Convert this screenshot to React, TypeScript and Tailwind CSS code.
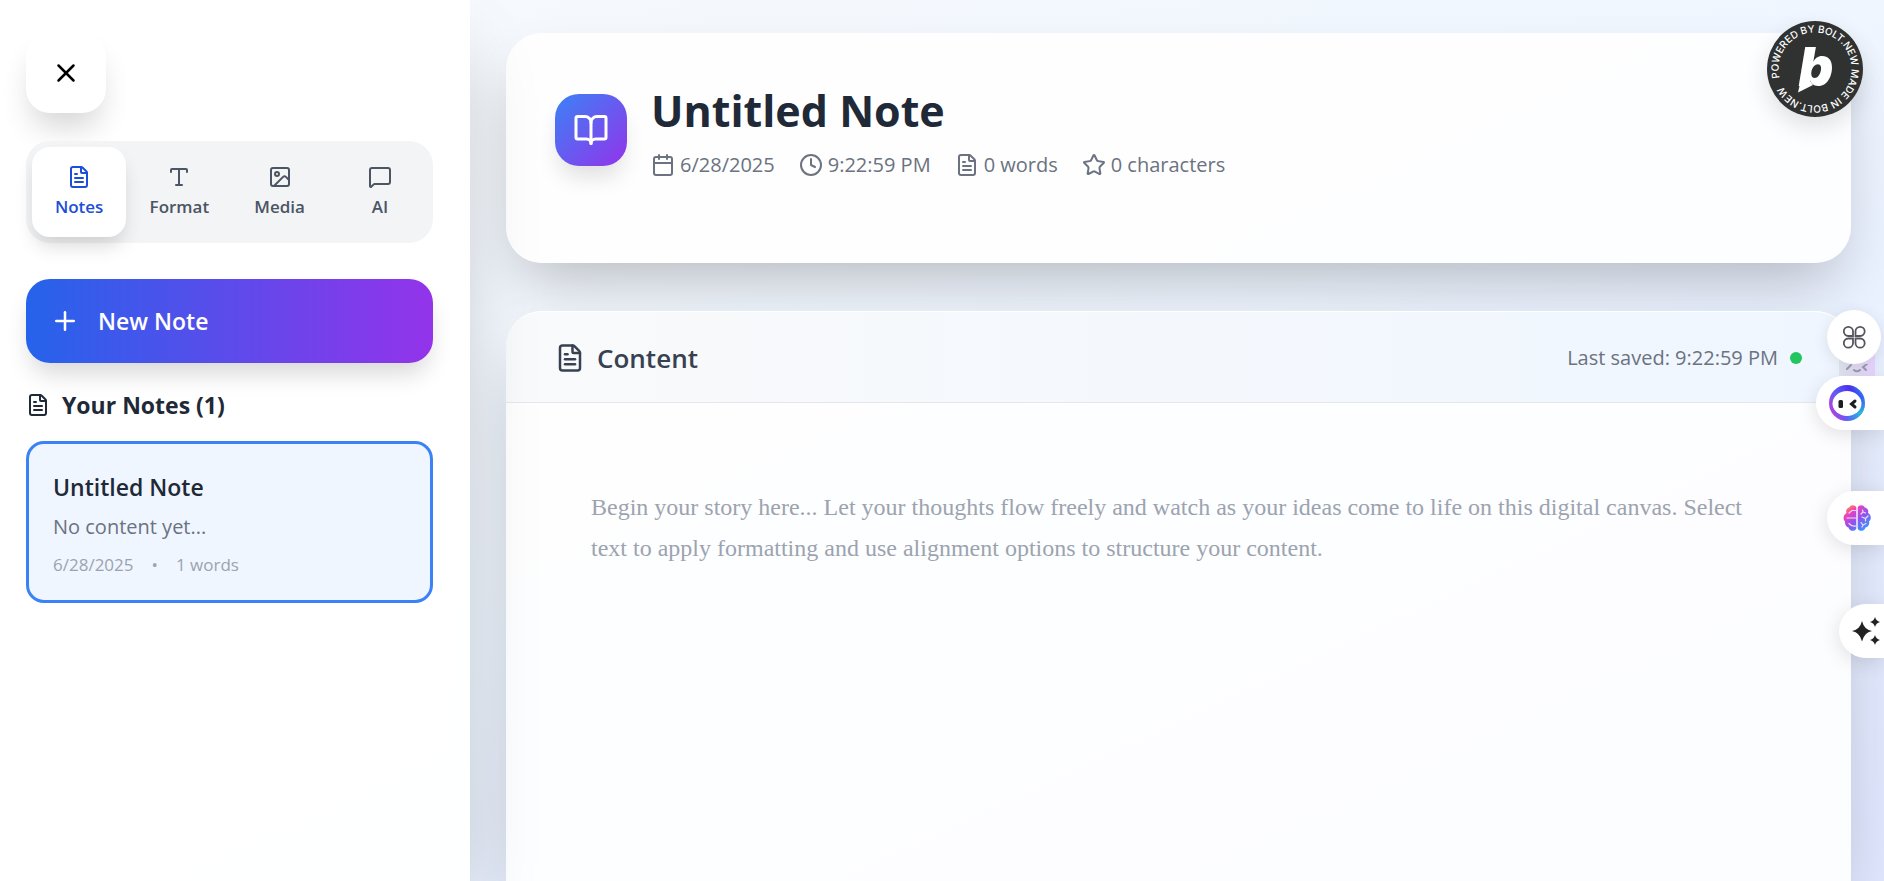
import { useState } from "react";
import type { ReactNode } from "react";
import {
  BookOpen,
  Calendar,
  Clock,
  FileText,
  Image,
  MessageSquare,
  Plus,
  Star,
  Type,
  X,
} from "lucide-react";

const tabs = [
  { id: "notes", label: "Notes", icon: FileText },
  { id: "format", label: "Format", icon: Type },
  { id: "media", label: "Media", icon: Image },
  { id: "ai", label: "AI", icon: MessageSquare },
];

const stats = [
  { label: "6/28/2025", icon: Calendar },
  { label: "9:22:59 PM", icon: Clock },
  { label: "0 words", icon: FileText },
  { label: "0 characters", icon: Star },
];

export default function App() {
  const [content, setContent] = useState("");

  return (
    <div className="relative flex h-screen overflow-hidden bg-linear-to-br/srgb from-[#f8fafc] via-[#eff6ff] to-[#e0e7ff] font-['Segoe_UI','Open_Sans',sans-serif]">
      <Sidebar />

      <main className="flex min-w-0 flex-1 flex-col gap-12 pt-[33px] pr-[33px] pl-9">
        <header className="flex min-h-[230px] shrink-0 items-start gap-6 rounded-[36px] bg-white/90 px-[49px] pt-12 shadow-[0_30px_60px_-15px_rgba(0,0,0,0.25)]">
          <div className="mt-[13px] flex size-18 items-center justify-center rounded-3xl bg-linear-to-br/srgb from-[#3b82f6] to-[#9333ea] text-white shadow-[0_15px_22px_-4px_rgba(0,0,0,0.12)]">
            <BookOpen size={36} />
          </div>
          <div>
            <h1 className="text-[43px] leading-[60px] font-bold text-[#1f2937]">Untitled Note</h1>
            <ul className="mt-2 flex items-center gap-6 text-xl leading-8 text-[#6b7280]">
              {stats.map(({ label, icon: Icon }) => (
                <li key={label} className="flex items-center gap-[5px]">
                  <Icon size={24} />
                  <span>{label}</span>
                </li>
              ))}
            </ul>
          </div>
        </header>

        <section className="flex flex-1 flex-col rounded-t-[36px] bg-white/90 shadow-[0_38px_75px_-18px_rgba(0,0,0,0.25)]">
          <div className="flex h-[92px] items-center justify-between rounded-t-[36px] border-t border-b border-t-white border-b-[#e5e7eb] bg-linear-to-r/srgb from-[#f9fafb] to-[#eff6ff] px-[49px] pt-0.5">
            <h2 className="flex items-center gap-3 text-[26px] font-semibold text-[#374151]">
              <FileText size={30} />
              Content
            </h2>
            <p className="flex items-center gap-3 text-xl text-[#6b7280]">
              Last saved: 9:22:59 PM
              <span className="size-3 rounded-full bg-[#22c55e]" />
            </p>
          </div>
          <textarea
            aria-label="Note content"
            value={content}
            onChange={(e) => setContent(e.target.value)}
            placeholder="Begin your story here... Let your thoughts flow freely and watch as your ideas come to life on this digital canvas. Select text to apply formatting and use alignment options to structure your content."
            className="flex-1 resize-none bg-transparent px-[85px] pt-21 font-['Liberation_Serif',serif] text-2xl leading-[41px] text-[#1f2937] outline-none placeholder:text-[#9ca3af]"
          />
        </section>
      </main>

      <BoltBadge />
      <FloatingTools />
    </div>
  );
}

function Sidebar() {
  const [active, setActive] = useState("notes");

  return (
    <aside className="relative w-[470px] shrink-0 bg-white/95 pt-[33px] pr-[37px] pl-[26px] shadow-[0_38px_75px_-18px_rgba(0,0,0,0.25)]">
      <button
        aria-label="Close sidebar"
        className="flex size-20 items-center justify-center rounded-3xl bg-white text-black shadow-[0_20px_30px_-6px_rgba(0,0,0,0.16)]"
      >
        <X size={30} />
      </button>

      <nav className="mt-7 grid grid-cols-4 gap-1.5 rounded-3xl bg-[#f3f4f6] p-1.5">
        {tabs.map(({ id, label, icon: Icon }) => (
          <button
            key={id}
            onClick={() => setActive(id)}
            className={
              active === id
                ? "flex h-[90px] flex-col items-center justify-center gap-1 rounded-[18px] bg-white pt-0.5 text-[#1d4ed8] shadow-[0_12px_20px_-4px_rgba(0,0,0,0.16)]"
                : "flex h-[90px] flex-col items-center justify-center gap-1 rounded-[18px] pt-0.5 text-[#4b5563]"
            }
          >
            <Icon size={24} />
            <span className="text-[17px] leading-7 font-semibold">{label}</span>
          </button>
        ))}
      </nav>

      <button className="mt-9 flex h-21 w-full items-center gap-[18px] rounded-3xl bg-linear-to-r/srgb from-[#2563eb] to-[#9333ea] px-6 text-[23px] font-semibold text-white shadow-[0_15px_24px_-5px_rgba(0,0,0,0.16)]">
        <Plus size={30} />
        New Note
      </button>

      <h3 className="mt-6 flex items-center gap-3 text-[23px] leading-9 font-bold text-[#1f2937]">
        <FileText size={24} />
        Your Notes (1)
      </h3>

      <article className="mt-[18px] rounded-[18px] border-3 border-[#3b82f6] bg-[#eff6ff] px-6 pt-[25px] pb-[21px] text-[#6b7280]">
        <h4 className="text-[23px] leading-9 font-semibold text-[#1f2937]">Untitled Note</h4>
        <p className="mt-1.5 text-xl leading-8">No content yet...</p>
        <p className="mt-2 flex gap-[18px] text-[17px] leading-7 text-[#9ca3af]">
          <span>6/28/2025</span>
          <span>•</span>
          <span>1 words</span>
        </p>
      </article>
    </aside>
  );
}

function BoltBadge() {
  return (
    <a
      href="https://bolt.new"
      aria-label="Powered by Bolt.new"
      className="absolute top-[21px] right-[21px] size-24 rounded-full shadow-[0_10px_24px_rgba(0,0,0,0.12)]"
    >
      <svg viewBox="0 0 96 96" className="size-full">
        <circle cx="48" cy="48" r="48" fill="#303231" />
        <defs>
          <path id="ring" d="M48 48 m-36.5 0 a36.5 36.5 0 1 1 73 0 a36.5 36.5 0 1 1 -73 0" />
        </defs>
        <g transform="rotate(-14 48 48)">
          <text fill="#fff" className="font-['Inter',sans-serif] text-[10px] font-medium">
            <textPath href="#ring">POWERED BY BOLT.NEW MADE IN BOLT.NEW</textPath>
          </text>
        </g>
        <path d="M36 50 L31 71.500 L46 64 Z" fill="#fff" />
        <text x="31.500" y="65" fill="#fff" className="font-['Inter',sans-serif] text-[54px] font-black italic">
          b
        </text>
      </svg>
    </a>
  );
}

function FloatingTools() {
  return (
    <>
      <div className="absolute top-[340px] right-[9px] flex h-9 w-9 items-end justify-center bg-linear-to-r from-slate-200 to-purple-200">
        <svg viewBox="0 0 24 12" className="h-3 w-6" fill="none" stroke="#9a9fb3" strokeWidth="2" strokeLinecap="round">
          <path d="M6 1 L2 5 M9 6 Q12 8.500 15 6 M22 0 L18 3 L21 6" />
        </svg>
      </div>

      <button
        aria-label="Apps"
        className="absolute top-[310px] right-[3px] flex size-[54px] items-center justify-center rounded-full bg-white shadow-[0_4px_16px_rgba(0,0,0,0.1)]"
      >
        <svg viewBox="0 0 24 24" className="size-6" fill="none" stroke="#55555d" strokeWidth="1.800">
          <path d="M11 11 H6.300 A4.600 4.600 0 1 1 11 6.300 Z" />
          <path d="M13.500 11 V6.300 A4.600 4.600 0 1 1 18.200 11 Z" />
          <path d="M11 13.500 V18.200 A4.600 4.600 0 1 1 6.300 13.500 Z" />
          <path d="M13.500 13.500 H18.200 A4.600 4.600 0 1 1 13.500 18.200 Z" />
        </svg>
      </button>

      <SideTab label="Assistant" className="top-[376px] w-[68px] pl-[13px]">
        <svg viewBox="0 0 36 36" className="size-9">
          <defs>
            <linearGradient id="face" x1="0" y1="0.800" x2="1" y2="0.300">
              <stop offset="0" stopColor="#c23be0" />
              <stop offset="0.400" stopColor="#5b5cf6" />
              <stop offset="0.750" stopColor="#4b2ff0" />
              <stop offset="1" stopColor="#2f7df0" />
            </linearGradient>
            <radialGradient id="faceGlow" cx="0.900" cy="0.800" r="0.450">
              <stop offset="0" stopColor="#24c8dc" />
              <stop offset="1" stopColor="#24c8dc" stopOpacity="0" />
            </radialGradient>
          </defs>
          <circle cx="18" cy="18" r="18" fill="url(#face)" />
          <circle cx="18" cy="18" r="18" fill="url(#faceGlow)" />
          <ellipse cx="18" cy="18.500" rx="14.500" ry="12.500" fill="#fff" />
          <rect x="9.500" y="15" width="4.500" height="8" rx="1.500" fill="#1d1d24" />
          <path d="M26 16 L22.500 19 L26 22" fill="none" stroke="#1d1d24" strokeWidth="3" strokeLinecap="round" />
        </svg>
      </SideTab>

      <SideTab label="Memory" className="top-[491px] w-[57px] pl-4">
        <svg viewBox="0 0 28 28" className="size-7">
          <defs>
            <linearGradient id="brain" x1="0.100" y1="0" x2="0.900" y2="1">
              <stop offset="0" stopColor="#fba41a" />
              <stop offset="0.250" stopColor="#ee3fc0" />
              <stop offset="0.550" stopColor="#8a55f0" />
              <stop offset="1" stopColor="#22a8ff" />
            </linearGradient>
          </defs>
          <path
            d="M13.300 3.500 C12 .5 7.500.5 6.300 3.500 C3.500 4 2.500 7 3.500 9 C.5 10.500-.5 15 2 17.500 C1.500 20.500 3.500 23 5.500 23.500 C6.500 27.500 12 28 13.300 24.500 Z
               M14.700 3.500 C16 .5 20.500.5 21.700 3.500 C24.500 4 26 6.500 25 9 C28 10.500 29 15 26 17.500 C27 20.500 25 23 22.500 23.500 C21.500 27.500 16 28 14.700 24.500 Z"
            fill="url(#brain)"
          />
          <path
            d="M6 9 L9 6.500 H13 M4 14 H13 M6 19.500 Q9 23 13 22 M18 10 L20 8 L19.500 6 M20 8 L22.500 9 M19 13 L22.500 14.500 L25 12 M22.500 14.500 V17 M18 18.500 L20 21 L23 19.500 M20 21 L19 23"
            fill="none"
            stroke="#fbd5f5"
            strokeWidth="1.200"
            strokeLinecap="round"
          />
        </svg>
      </SideTab>

      <SideTab label="Sparkles" className="top-[604px] w-[45px] pl-3">
        <svg viewBox="0 0 30 30" className="size-[30px] shrink-0" fill="#222">
          <path d="M11 5 Q13 13.500 21 15 Q13 16.500 11 25.500 Q9 16.500 1 15 Q9 13.500 11 5 Z" />
          <path d="M24 1 Q25 5 29 6 Q25 7 24 11 Q23 7 19 6 Q23 5 24 1 Z" />
          <path d="M24 19 Q25 23 29 24 Q25 25 24 29 Q23 25 19 24 Q23 23 24 19 Z" />
        </svg>
      </SideTab>
    </>
  );
}

function SideTab({ label, className, children }: { label: string; className: string; children: ReactNode }) {
  return (
    <button
      aria-label={label}
      className={`absolute right-0 flex h-[54px] items-center rounded-l-full bg-white shadow-[0_4px_20px_rgba(0,0,0,0.12)] ${className}`}
    >
      {children}
    </button>
  );
}
